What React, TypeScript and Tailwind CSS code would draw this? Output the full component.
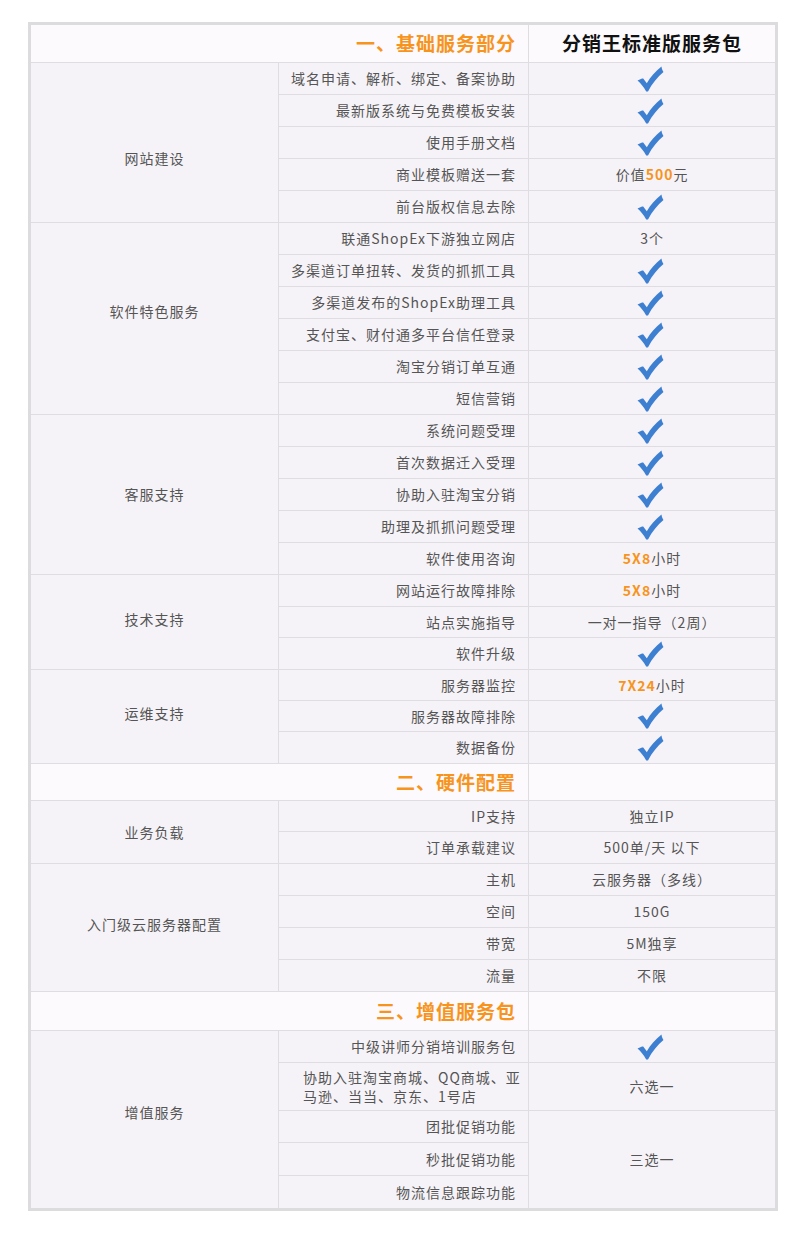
import React from 'react';

type Item = {
  label: React.ReactNode;
  value?: React.ReactNode;
  span?: number;
  h: string;
  left?: boolean;
};

type Group = { title: string; items: Item[]; pad?: string };

const Check = () => (
  <div className="flex justify-center pr-[4px]">
    <svg width="27" height="26" viewBox="0 0 27 26" className="block">
      <path
        d="M0.5 14.5 C3 13 5 12.4 6.2 12.4 L9.8 17.2 C13.5 11 18.5 5 24.5 0.5 C24.8 2.8 25.4 4.6 26.5 6 C20.5 11 15 17.5 11 25.5 L9.2 25.5 C6.8 21 3.8 17.5 0.5 14.5 Z"
        fill="#3d7fd1"
      />
    </svg>
  </div>
);

const Orange = ({ children }: { children: React.ReactNode }) => (
  <span className="font-bold text-[#f7941d]">{children}</span>
);

const hours = (v: string) => (
  <>
    <Orange>{v}</Orange>小时
  </>
);

const basic: Group[] = [
  {
    title: '网站建设',
    pad: 'pt-[32px]',
    items: [
      { label: '域名申请、解析、绑定、备案协助', value: <Check />, h: 'h-[32px]' },
      { label: '最新版系统与免费模板安装', value: <Check />, h: 'h-[32px]' },
      { label: '使用手册文档', value: <Check />, h: 'h-[32px]' },
      { label: '商业模板赠送一套', value: <>价值<Orange>500</Orange>元</>, h: 'h-[32px]' },
      { label: '前台版权信息去除', value: <Check />, h: 'h-[32px]' },
    ],
  },
  {
    title: '软件特色服务',
    pad: 'pb-[14px]',
    items: [
      { label: '联通ShopEx下游独立网店', value: '3个', h: 'h-[32px]' },
      { label: '多渠道订单扭转、发货的抓抓工具', value: <Check />, h: 'h-[32px]' },
      { label: '多渠道发布的ShopEx助理工具', value: <Check />, h: 'h-[32px]' },
      { label: '支付宝、财付通多平台信任登录', value: <Check />, h: 'h-[32px]' },
      { label: '淘宝分销订单互通', value: <Check />, h: 'h-[32px]' },
      { label: '短信营销', value: <Check />, h: 'h-[32px]' },
    ],
  },
  {
    title: '客服支持',
    items: [
      { label: '系统问题受理', value: <Check />, h: 'h-[32px]' },
      { label: '首次数据迁入受理', value: <Check />, h: 'h-[32px]' },
      { label: '协助入驻淘宝分销', value: <Check />, h: 'h-[32px]' },
      { label: '助理及抓抓问题受理', value: <Check />, h: 'h-[32px]' },
      { label: '软件使用咨询', value: hours('5X8'), h: 'h-[32px]' },
    ],
  },
  {
    title: '技术支持',
    pad: 'pb-[6px]',
    items: [
      { label: '网站运行故障排除', value: hours('5X8'), h: 'h-[32px]' },
      { label: '站点实施指导', value: '一对一指导（2周）', h: 'h-[31px]' },
      { label: '软件升级', value: <Check />, h: 'h-[32px]' },
    ],
  },
  {
    title: '运维支持',
    pad: 'pb-[6px]',
    items: [
      { label: '服务器监控', value: hours('7X24'), h: 'h-[31px]' },
      { label: '服务器故障排除', value: <Check />, h: 'h-[31px]' },
      { label: '数据备份', value: <Check />, h: 'h-[32px]' },
    ],
  },
];

const hardware: Group[] = [
  {
    title: '业务负载',
    items: [
      { label: 'IP支持', value: '独立IP', h: 'h-[31px]' },
      { label: '订单承载建议', value: '500单/天 以下', h: 'h-[32px]' },
    ],
  },
  {
    title: '入门级云服务器配置',
    pad: 'pb-[6px]',
    items: [
      { label: '主机', value: '云服务器（多线）', h: 'h-[32px]' },
      { label: '空间', value: '150G', h: 'h-[32px]' },
      { label: '带宽', value: '5M独享', h: 'h-[32px]' },
      { label: '流量', value: '不限', h: 'h-[32px]' },
    ],
  },
];

const extra: Group[] = [
  {
    title: '增值服务',
    pad: 'pb-[14px]',
    items: [
      { label: '中级讲师分销培训服务包', value: <Check />, h: 'h-[32px]' },
      {
        label: (
          <>
            协助入驻淘宝商城、QQ商城、亚
            <br />
            马逊、当当、京东、1号店
          </>
        ),
        value: '六选一',
        h: 'h-[48px]',
        left: true,
      },
      { label: '团批促销功能', value: '三选一', span: 3, h: 'h-[32px]' },
      { label: '秒批促销功能', h: 'h-[33px]' },
      { label: '物流信息跟踪功能', h: 'h-[32px]' },
    ],
  },
];

const cell = 'border-r border-b border-[#dfdce2] bg-[#f6f3f8] align-middle';

const GroupRows = ({ group, last }: { group: Group; last?: boolean }) => (
  <>
    {group.items.map((it, i) => {
      const isLastRow = last && i === group.items.length - 1;
      return (
        <tr key={i} className={it.h}>
          {i === 0 && (
            <td
              rowSpan={group.items.length}
              className={`${cell} text-center ${group.pad ?? ''} ${last ? 'border-b-0' : ''}`}
            >
              {group.title}
            </td>
          )}
          <td
            className={`${cell} ${isLastRow ? 'border-b-0' : ''} ${
              it.left
                ? 'whitespace-nowrap pl-[24px] pr-[6px] text-left leading-[19px]'
                : 'pr-[12px] text-right'
            }`}
          >
            {it.label}
          </td>
          {it.value !== undefined && (
            <td
              rowSpan={it.span ?? 1}
              className={`${cell} border-r-0 text-center ${
                last && i + (it.span ?? 1) === group.items.length ? 'border-b-0' : ''
              }`}
            >
              {it.value}
            </td>
          )}
        </tr>
      );
    })}
  </>
);

const SectionRow = ({ title, right, h }: { title: string; right?: string; h: string }) => (
  <tr className={h}>
    <td colSpan={2} className="border-r border-b border-[#dfdce2] bg-[#fdfafd] pr-[12px] text-right align-middle">
      <span className="text-[19px] font-bold tracking-[1px] text-[#f7941d]">{title}</span>
    </td>
    <td className="border-b border-[#dfdce2] bg-[#fdfafd] text-center align-middle">
      {right && <span className="text-[19px] font-bold tracking-[1px] text-[#111]">{right}</span>}
    </td>
  </tr>
);

const App = () => {
  return (
    <div
      className="min-h-[1234px] bg-white pt-[22px] pl-[28px]"
      style={{ fontFamily: '"Noto Sans CJK SC", "Liberation Sans", sans-serif' }}
    >
      <div className="w-[750px] border-[3px] border-[#dcdbdd]">
        <table className="w-[744px] table-fixed border-separate border-spacing-0 text-[14px] tracking-[1px] text-[#555]">
          <colgroup>
            <col className="w-[248px]" />
            <col className="w-[250px]" />
            <col className="w-[246px]" />
          </colgroup>
          <tbody>
            <SectionRow title="一、基础服务部分" right="分销王标准版服务包" h="h-[38px]" />
            {basic.map((g) => (
              <GroupRows key={g.title} group={g} />
            ))}
            <SectionRow title="二、硬件配置" h="h-[37px]" />
            {hardware.map((g) => (
              <GroupRows key={g.title} group={g} />
            ))}
            <SectionRow title="三、增值服务包" h="h-[39px]" />
            {extra.map((g) => (
              <GroupRows key={g.title} group={g} last />
            ))}
          </tbody>
        </table>
      </div>
    </div>
  );
};

export default App;
